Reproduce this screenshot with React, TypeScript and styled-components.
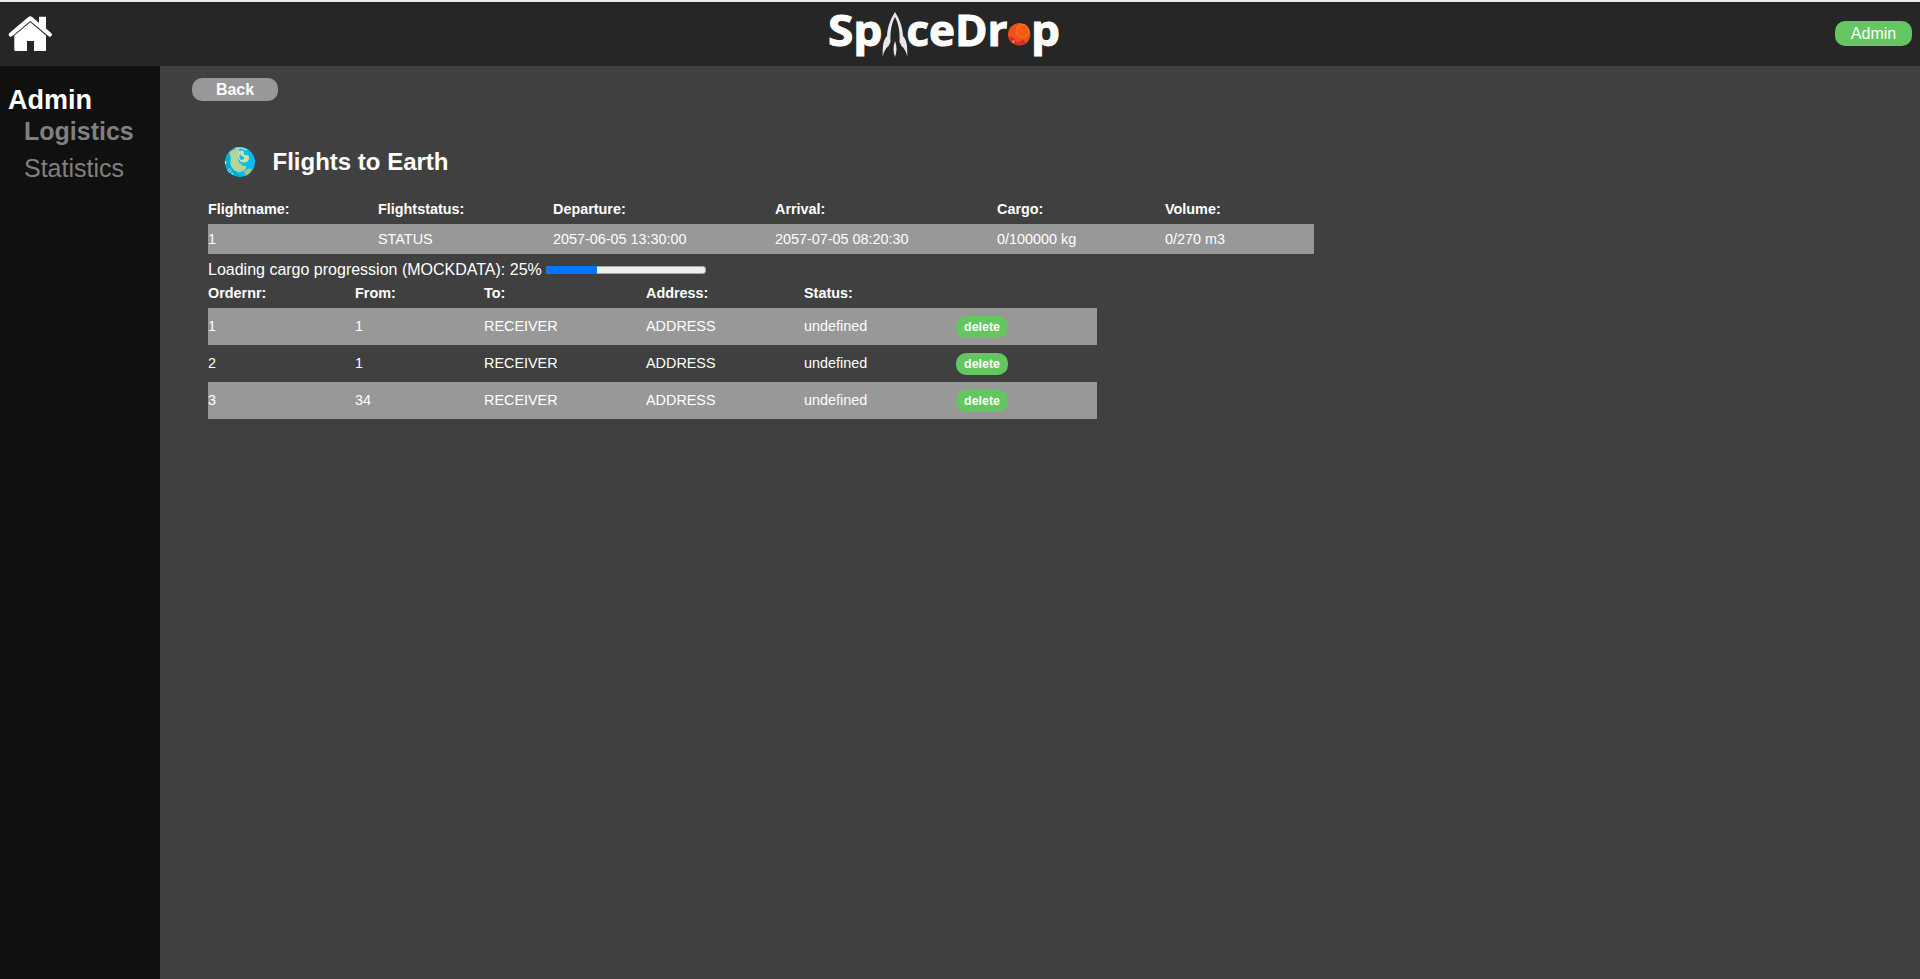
import React from "react";
import styled, { createGlobalStyle } from "styled-components";

const GlobalStyle = createGlobalStyle`
  * { box-sizing: border-box; }
  body {
    margin: 0;
    background: #404040;
    color: #fff;
    font-family: "Liberation Sans", Arial, sans-serif;
    font-size: 16px;
    overflow: hidden;
  }
`;

const Page = styled.div`
  display: flex;
  flex-direction: column;
  height: 100vh;
`;

const Header = styled.header`
  display: grid;
  grid-template-columns: 1fr auto 1fr;
  align-items: center;
  height: 66px;
  flex: none;
  padding: 0 8px;
  border-top: 2px solid #e8eaed;
  background: #262626;
`;

const HomeLink = styled.a`
  display: flex;
  svg { display: block; }
`;

const Logo = styled.svg`
  display: block;
  margin-right: 28px;
  overflow: visible;
  font-family: "Open Sans", "Noto Sans", sans-serif;
  font-weight: 700;
`;

const AdminButton = styled.button`
  justify-self: end;
  width: 77px;
  height: 25px;
  margin-bottom: 1px;
  padding: 0;
  border: 0;
  border-radius: 10px;
  background: #64c660;
  color: #fff;
  font: 16px "Liberation Sans", Arial, sans-serif;
`;

const Body = styled.div`
  display: flex;
  flex: 1;
`;

const Sidebar = styled.nav`
  width: 160px;
  padding: 18px 8px;
  background: #101010;
`;

const SideTitle = styled.div`
  font-size: 27px;
  font-weight: 700;
  line-height: 32px;
`;

const SideLink = styled.div<{ $active?: boolean }>`
  padding-left: 16px;
  font-size: 25px;
  line-height: 37px;
  font-weight: ${(p) => (p.$active ? 700 : 400)};
  margin-top: ${(p) => (p.$active ? "-3px" : "0")};
  color: #808080;
`;

const Main = styled.main`
  flex: 1;
  padding: 12px 32px;
`;

const BackButton = styled.button`
  display: block;
  width: 86px;
  height: 23px;
  padding: 0;
  border: 0;
  border-radius: 10px;
  background: #989898;
  color: #fff;
  font: 700 16px "Liberation Sans", Arial, sans-serif;
`;

const Content = styled.section`
  padding: 46px 0 0 16px;
`;

const Title = styled.h2`
  display: flex;
  align-items: center;
  gap: 17.5px;
  height: 30px;
  margin: 0 0 0 17px;
  font-size: 24px;
`;

const FlightTable = styled.div`
  width: 1106px;
  margin-top: 17px;
  font-size: 14.4px;
`;

const OrderTable = styled.div`
  width: 889px;
  font-size: 14.4px;
`;

const Row = styled.div<{ $cols: string; $height: number; $head?: boolean; $shaded?: boolean; $lift?: number }>`
  display: grid;
  grid-template-columns: ${(p) => p.$cols};
  align-items: center;
  height: ${(p) => p.$height}px;
  font-weight: ${(p) => (p.$head ? 700 : 400)};
  background: ${(p) => (p.$shaded ? "#989898" : "transparent")};

  span { padding-bottom: ${(p) => p.$lift ?? 0}px; }
`;

const DeleteButton = styled.button`
  display: block;
  width: 52px;
  height: 22px;
  margin-top: 1px;
  padding: 0 0 1px;
  border: 0;
  border-radius: 10px;
  background: #64c660;
  color: #fff;
  font: 700 12.4px "Liberation Sans", Arial, sans-serif;
`;

const Loading = styled.div`
  display: flex;
  align-items: center;
  gap: 4px;
  height: 30px;
  padding-top: 1px;
  white-space: pre;
`;

const Track = styled.div`
  width: 160px;
  height: 8px;
  overflow: hidden;
  border-radius: 4px;
  background: #efefef;
  box-shadow: inset 0 0 0 1px #a5a5a5;
`;

const Fill = styled.div`
  height: 8px;
  background: #0075ff;
`;

const flightCols = "170px 175px 222px 222px 168px 1fr";
const orderCols = "147px 129px 162px 158px 152px 1fr";

const orders = [
  { nr: 1, from: 1 },
  { nr: 2, from: 1 },
  { nr: 3, from: 34 },
];

const HomeIcon = () => (
  <svg width="45" height="36" viewBox="0 0 45 36" fill="#fff">
    <path d="M22.3 0.3 Q23.3 0.3 24.2 1 L31 7 V1.3 Q31 .7 31.6 .7 H37.4 Q38 .7 38 1.3 V12.6 L43.4 17.2 Q44.6 18.4 43.6 19.7 Q42.3 21.5 40.6 20.2 L22.3 4.9 L4 20.2 Q2.3 21.5 1 19.7 Q0 18.4 1.2 17.2 L20.4 1 Q21.3 .3 22.3 .3Z" />
    <path d="M22.3 6.2 L38 19.4 V34 Q38 35 37 35 H26 V25 H19 V35 H7.5 Q6.3 35 6.3 34 V19.4Z" />
  </svg>
);

const SpaceDropLogo = () => (
  <Logo width="236" height="62" viewBox="0 -3 236 62" fill="#fff">
    <g stroke="#fff" strokeWidth="1">
      <text x="0" y="39.500" fontSize="43.500" textLength="54.500" lengthAdjust="spacingAndGlyphs">Sp</text>
      <text x="78.500" y="39.500" fontSize="43.500" textLength="101" lengthAdjust="spacingAndGlyphs">ceDr</text>
      <text x="203" y="39.500" fontSize="43.500" textLength="29" lengthAdjust="spacingAndGlyphs">p</text>
    </g>
    <path fill="#e8e8e8" d="M67 6 C62 14 59.500 21 59 30 C55.500 34 54.500 38 54.700 50.500 Q56.500 43 60.500 40 L62.500 36 C62 26 63.500 17 67 11 C70.500 17 72 26 71.500 36 L73.500 40 Q77.500 43 79.300 50.500 C79.500 38 78.500 34 75 30 C74.500 21 72 14 67 6Z" />
    <path fill="#e8e8e8" d="M67 35 Q70 43 67 51 Q64 43 67 35Z" />
    <circle cx="191.200" cy="28.300" r="11.200" fill="#f04f18" />
    <path d="M180.700 32 Q185 29 187 34 T194 34 Q198 34 197 37.500 Q188 42 180.700 32Z" fill="#cb2c2b" />
    <circle cx="194.500" cy="25" r="6.500" fill="#f65b16" stroke="#f98238" strokeWidth=".8" />
    <circle cx="185.500" cy="35.500" r="1.200" fill="#ff8a54" />
  </Logo>
);

const EarthIcon = () => (
  <svg width="30" height="30" viewBox="0 0 30 30">
    <circle cx="15" cy="15" r="15" fill="#04bdf5" />
    <path d="M3.2 6 Q-2 15 3 24 Q9 30 17 29 Q6 25 5 14Z" fill="#00accf" />
    <path d="M4.5 5 Q9 1.5 14 2 Q15 6 14 9 Q12 14 16 17 Q17 19 21 19 Q22 22 18 24 Q12 27 8 22 Q4 18 6 12Z" fill="#b5d497" />
    <path d="M15 4 Q20 2 19 8 Q25 7 24 12 Q22 17 16 15 L15 13 Q20 13 19 10 Q14 9 15 4Z" fill="#d8dd91" />
    <path d="M19 25 Q22 20 27 22 Q25 27 21 28.500Z" fill="#a4c27c" />
    <path d="M10 1.200 Q17 0 22 3 M15 4 Q12 10 16 14" fill="none" stroke="#d8f3ee" strokeWidth="1" />
    <circle cx="4.500" cy="23.500" r="1.500" fill="none" stroke="#b9effb" strokeWidth=".8" />
    <path d="M0.5 14 V17 M6.500 26 L8 27" stroke="#d8f7ff" strokeWidth="1.200" />
  </svg>
);

export default function App() {
  return (
    <Page>
      <GlobalStyle />
      <Header>
        <HomeLink aria-label="Home"><HomeIcon /></HomeLink>
        <SpaceDropLogo />
        <AdminButton>Admin</AdminButton>
      </Header>
      <Body>
        <Sidebar>
          <SideTitle>Admin</SideTitle>
          <SideLink $active>Logistics</SideLink>
          <SideLink>Statistics</SideLink>
        </Sidebar>
        <Main>
          <BackButton>Back</BackButton>
          <Content>
            <Title><EarthIcon />Flights to Earth</Title>
            <FlightTable>
              <Row $cols={flightCols} $height={30} $head>
                <span>Flightname:</span><span>Flightstatus:</span><span>Departure:</span>
                <span>Arrival:</span><span>Cargo:</span><span>Volume:</span>
              </Row>
              <Row $cols={flightCols} $height={30} $shaded>
                <span>1</span><span>STATUS</span><span>2057-06-05 13:30:00</span>
                <span>2057-07-05 08:20:30</span><span>0/100000 kg</span><span>0/270 m3</span>
              </Row>
            </FlightTable>
            <Loading>
              Loading cargo progression (MOCKDATA): 25%
              <Track><Fill style={{ width: "32%" }} /></Track>
            </Loading>
            <OrderTable>
              <Row $cols={orderCols} $height={24} $head $lift={7}>
                <span>Ordernr:</span><span>From:</span><span>To:</span>
                <span>Address:</span><span>Status:</span>
              </Row>
              {orders.map((o, i) => (
                <Row key={o.nr} $cols={orderCols} $height={37} $lift={2} $shaded={i % 2 === 0}>
                  <span>{o.nr}</span><span>{o.from}</span><span>RECEIVER</span>
                  <span>ADDRESS</span><span>undefined</span>
                  <DeleteButton>delete</DeleteButton>
                </Row>
              ))}
            </OrderTable>
          </Content>
        </Main>
      </Body>
    </Page>
  );
}
